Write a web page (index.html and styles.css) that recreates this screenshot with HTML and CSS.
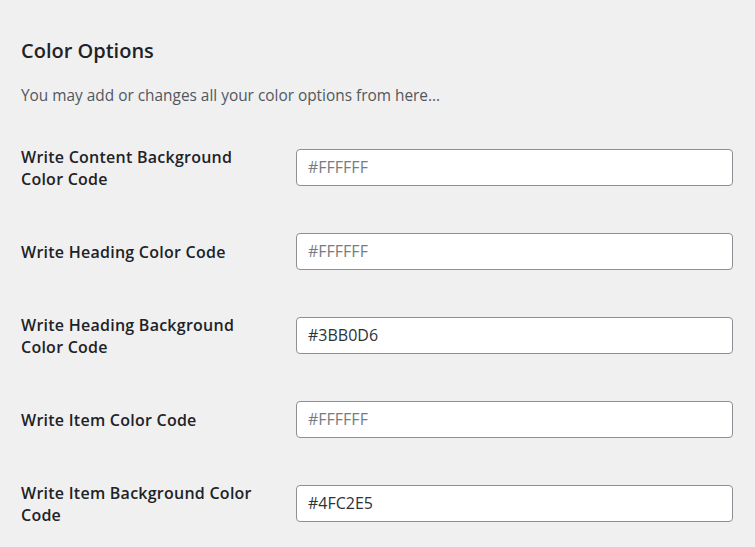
FILE: index.html
```html
<!DOCTYPE html>
<html>
<head>
<meta charset="utf-8">
<link rel="stylesheet" href="styles.css">
</head>
<body>
<div class="wrap">
  <h2 class="title">Color Options</h2>
  <p class="desc">You may add or changes all your color options from here...</p>
  <div class="table">
    <div class="row">
      <label class="label">Write Content Background Color Code</label>
      <input class="field" type="text" placeholder="#FFFFFF">
    </div>
    <div class="row">
      <label class="label">Write Heading Color Code</label>
      <input class="field" type="text" placeholder="#FFFFFF">
    </div>
    <div class="row">
      <label class="label">Write Heading Background Color Code</label>
      <input class="field" type="text" value="#3BB0D6">
    </div>
    <div class="row">
      <label class="label">Write Item Color Code</label>
      <input class="field" type="text" placeholder="#FFFFFF">
    </div>
    <div class="row">
      <label class="label">Write Item Background Color Code</label>
      <input class="field" type="text" value="#4FC2E5">
    </div>
  </div>
</div>
</body>
</html>
```

FILE: styles.css
```css
html, body {
  margin: 0;
  padding: 0;
  background: #f0f0f1;
}
body {
  font-family: "Open Sans", "Noto Sans", sans-serif;
  color: #1d2327;
}
.wrap {
  padding: 0 21px;
}
.title {
  margin: 0;
  padding-top: 38px;
  font-size: 20px;
  line-height: 26px;
  font-weight: 600;
}
.desc {
  margin: 0;
  padding-top: 21px;
  font-size: 15.4px;
  line-height: 22px;
  color: #50575e;
}
.table {
  margin-top: 18px;
}
.row {
  display: flex;
  align-items: center;
  height: 84px;
}
.label {
  width: 240px;
  margin-right: 35px;
  padding-top: 1px;
  font-size: 16px;
  line-height: 22px;
  letter-spacing: 0.25px;
  font-weight: 600;
}
.field {
  box-sizing: border-box;
  width: 437px;
  height: 37px;
  margin: 0;
  padding: 0 11px;
  border: 1px solid #8c8f94;
  border-radius: 4px;
  background: #fff;
  font-family: "Open Sans", "Noto Sans", sans-serif;
  font-size: 16px;
  color: #2c3338;
  outline: none;
}
.field::placeholder {
  color: #787c82;
  opacity: 1;
}
```
